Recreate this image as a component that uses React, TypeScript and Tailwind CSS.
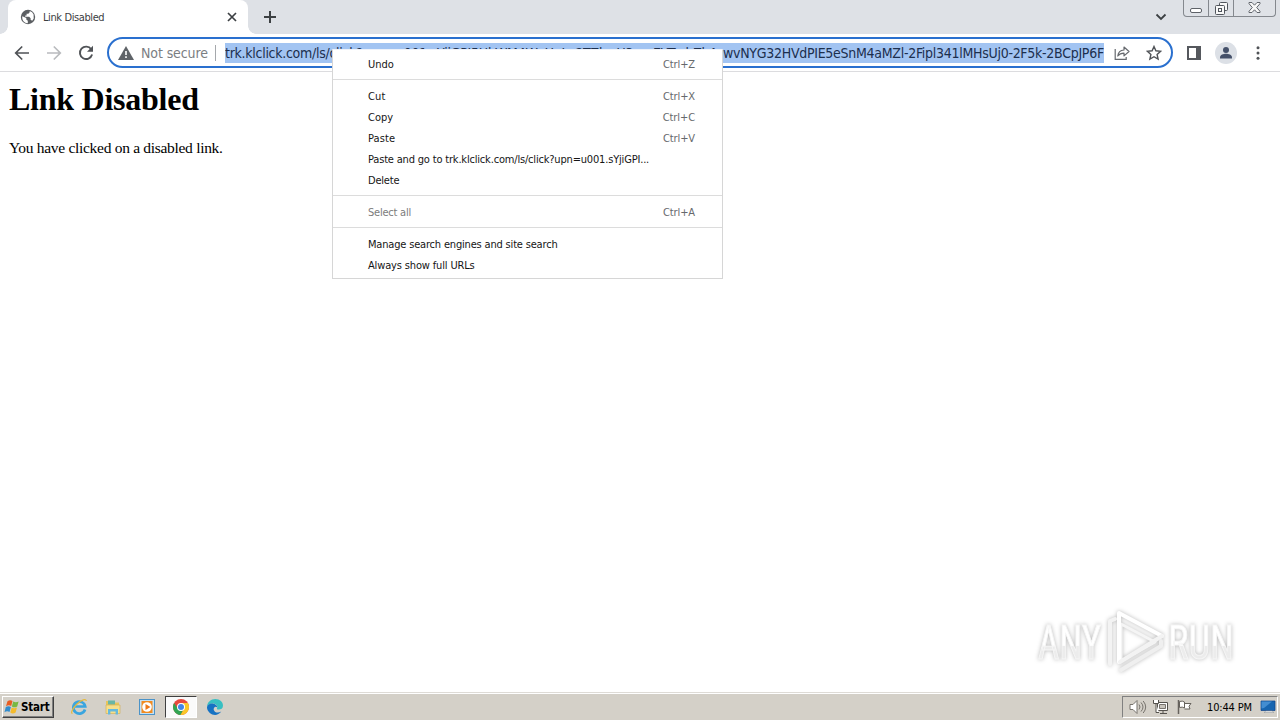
import type { ReactNode } from "react";

const UI_FONT = "font-['DejaVu_Sans_Condensed','DejaVu_Sans',sans-serif] [font-stretch:condensed] whitespace-nowrap";

interface MenuItem {
  label: string;
  shortcut?: string;
  disabled?: boolean;
  tracking?: string;
}

const menuGroups: MenuItem[][] = [
  [{ label: "Undo", shortcut: "Ctrl+Z" }],
  [
    { label: "Cut", shortcut: "Ctrl+X", tracking: "tracking-[0.1px]" },
    { label: "Copy", shortcut: "Ctrl+C" },
    { label: "Paste", shortcut: "Ctrl+V", tracking: "tracking-[0.1px]" },
    { label: "Paste and go to trk.klclick.com/ls/click?upn=u001.sYjiGPI...", tracking: "tracking-[-0.18px]" },
    { label: "Delete", tracking: "tracking-[-0.2px]" },
  ],
  [{ label: "Select all", shortcut: "Ctrl+A", disabled: true, tracking: "tracking-[-0.23px]" }],
  [
    { label: "Manage search engines and site search", tracking: "tracking-[-0.18px]" },
    { label: "Always show full URLs", tracking: "tracking-[-0.15px]" },
  ],
];

function GlobeIcon() {
  return (
    <svg viewBox="0 0 16 16" className="size-4 shrink-0" aria-hidden="true">
      <circle cx="8" cy="8" r="7.2" fill="#5b5e62" />
      <path d="M2.3 7.2 6.3 9v1.6l1.5 1.2v2.4C4.4 14.2 1.7 11.2 2.3 7.2Z" fill="#fff" />
      <path d="M9.7 2.1v1.2L8.3 4.7H6.6v1.8H5.2v1.3h4l1.4 1.4v1.6l1.6 1 1.5-2.3-.1-4.1-1.5-2.1Z" fill="#fff" />
    </svg>
  );
}

function TabStrip() {
  return (
    <div className="flex h-[34px] bg-[#dee1e6]">
      <div className="relative ml-2 flex h-full w-60 items-center rounded-t-lg bg-white pl-3 pr-[11px]">
        <span className="absolute -left-2 bottom-0 size-2 bg-[radial-gradient(circle_at_0_0,transparent_7.5px,white_8px)]" />
        <span className="absolute -right-2 bottom-0 size-2 bg-[radial-gradient(circle_at_100%_0,transparent_7.5px,white_8px)]" />
        <GlobeIcon />
        <span className="ml-[7px] pt-0.5 text-[11px] leading-4 tracking-[-0.4px] text-[#3c4043]">Link Disabled</span>
        <svg viewBox="0 0 10 10" className="ml-auto size-[10px]" stroke="#3c4043" strokeWidth="1.7" aria-hidden="true">
          <path d="m1 1 8 8M9 1 1 9" />
        </svg>
      </div>
      <svg viewBox="0 0 12 12" className="ml-4 mt-[11px] size-3" stroke="#3c4043" strokeWidth="2" aria-hidden="true">
        <path d="M6 0v12M0 6h12" />
      </svg>
      <svg viewBox="0 0 12 8" className="ml-auto mr-4 mt-[13px] h-2 w-3" fill="none" stroke="#3c4043" strokeWidth="1.8" aria-hidden="true">
        <path d="m1.5 1.5 4.5 4.5 4.5-4.5" />
      </svg>
      <WindowButtons />
    </div>
  );
}

function WindowButtons() {
  return (
    <div className="mr-1 flex h-[17px] w-[93px] rounded-b-[4px] border border-t-0 border-[#84888e] bg-[#dfe2e7]">
      <div className="flex w-[25px] justify-center border-r border-[#84888e]">
        <span className="mt-2 h-[5px] w-3 rounded-[2px] border border-[#5e6268] bg-white" />
      </div>
      <div className="flex w-[25px] justify-center border-r border-[#84888e]">
        <svg viewBox="0 0 13 13" className="mt-[2px] size-[13px]" fill="#f8f8f8" stroke="#50555c" aria-hidden="true">
          <rect x="4.5" y=".5" width="8" height="8" rx="1" />
          <rect x=".5" y="3.5" width="9" height="9" rx="1" />
          <rect x="3.5" y="6.5" width="3" height="3" />
        </svg>
      </div>
      <div className="flex flex-1 justify-center">
        <svg viewBox="0 0 13 11" className="mt-[2px] h-[11px] w-[13px]" fill="#f8f8f8" stroke="#62666d" aria-hidden="true">
          <path d="M1 .5h3l2.5 2.7L9 .5h3v1.2L8.7 5.5 12 9.3v1.2H9L6.5 7.8 4 10.5H1V9.3l3.3-3.8L1 1.7Z" />
        </svg>
      </div>
    </div>
  );
}

function Toolbar() {
  return (
    <div className="flex h-[38px] items-center border-b border-[#dcdcdf] bg-white pl-[14px]">
      <svg viewBox="0 0 16 16" className="size-4" fill="none" stroke="#505357" strokeWidth="1.7" aria-hidden="true">
        <path d="M15 8H2M8.2 1.5 1.7 8l6.5 6.5" />
      </svg>
      <svg viewBox="0 0 16 16" className="ml-4 size-4" fill="none" stroke="#b9bbbe" strokeWidth="1.7" aria-hidden="true">
        <path d="M1 8h13M7.8 1.5 14.3 8l-6.5 6.5" />
      </svg>
      <svg viewBox="0 0 16 16" className="ml-4 size-4" aria-hidden="true">
        <path d="M13.2 4.2A6.2 6.2 0 1 0 14.1 9.5" fill="none" stroke="#505357" strokeWidth="1.9" />
        <path d="M15 .8v6H9Z" fill="#505357" />
      </svg>

      <div className="ml-[13px] flex h-[31px] w-[1066px] shrink-0 items-center rounded-full border-2 border-[#2a70cf] bg-white pl-[9px]">
        <svg viewBox="0 0 16 14" className="h-[14px] w-4 shrink-0" aria-hidden="true">
          <path d="M8 0 16 14H0Z" fill="#5f6368" />
          <path d="M7.2 5h1.6v4H7.2Zm0 5.3h1.6v1.6H7.2Z" fill="#fff" />
        </svg>
        <span className="ml-[7px] w-[67px] shrink-0 text-sm tracking-[-0.1px] text-[#7b7e82]">Not secure</span>
        <span className="ml-[7px] h-4 w-px shrink-0 bg-[#a5a8ac]" />
        <div className="ml-[9px] flex h-5 w-[879px] shrink-0 items-center overflow-hidden bg-[#a2c4f2] text-sm tracking-[-0.28px] text-[#1c2f4e]">
          <span className="w-[498px] shrink-0">
            trk.klclick.com/ls/click?upn=u001.sYjiGPI5HkWM4WvUuLe2TZhwU3muEYTrvhZk4
          </span>
          <span className="shrink-0">wvNYG32HVdPIE5eSnM4aMZl-2Fipl341lMHsUj0-2F5k-2BCpJP6F</span>
        </div>
        <svg viewBox="0 0 16 16" className="ml-[10px] size-4 shrink-0" fill="none" stroke="#66696e" strokeWidth="1.2" aria-hidden="true">
          <path d="M1.2 4v10.4h11V12" />
          <path d="M3.8 11C4.2 7.2 6.5 5.2 10 5V2l5 4.5-5 4.4V8.2C7.2 8.2 5.3 9 3.8 11Z" strokeLinejoin="round" />
        </svg>
        <svg viewBox="0 0 16 16" className="ml-4 size-4 shrink-0" fill="none" stroke="#505357" strokeWidth="1.4" aria-hidden="true">
          <path d="m8 1.5 1.9 4.3 4.7.5-3.5 3.1 1 4.7L8 11.7l-4.1 2.4 1-4.7-3.5-3.1 4.7-.5Z" />
        </svg>
      </div>

      <svg viewBox="0 0 14 14" className="ml-[14px] size-[14px]" aria-hidden="true">
        <path d="M1 1h12v12H1Z" fill="none" stroke="#55585d" strokeWidth="2" />
        <path d="M9 1h4v12H9Z" fill="#55585d" />
      </svg>
      <svg viewBox="0 0 22 22" className="ml-[14px] size-[22px]" aria-hidden="true">
        <circle cx="11" cy="11" r="11" fill="#dce0e6" />
        <circle cx="11" cy="8" r="3" fill="#45516a" />
        <path d="M5 16.5v-1.2c0-2.4 3.5-3.5 6-3.5s6 1.1 6 3.5v1.2Z" fill="#45516a" />
      </svg>
      <svg viewBox="0 0 4 16" className="ml-[19px] h-4 w-1" fill="#505357" aria-hidden="true">
        <circle cx="2" cy="2.8" r="1.5" />
        <circle cx="2" cy="8" r="1.5" />
        <circle cx="2" cy="13.2" r="1.5" />
      </svg>
    </div>
  );
}

function ContextMenu() {
  return (
    <div className={`absolute left-[332px] top-[49px] w-[391px] border border-[#d6d6d6] border-t-[#eef2fa] bg-white py-[3px] text-[11px] leading-[23px] ${UI_FONT}`}>
      {menuGroups.map((group, i) => (
        <div key={i} className={i > 0 ? "mt-[5px] border-t border-[#dcdcdc] pt-[5px]" : ""}>
          {group.map((item) => (
            <div
              key={item.label}
              className={`flex h-[21px] justify-between pl-[35px] pr-[27px] ${item.disabled ? "text-[#7c7c7c]" : "text-[#151515]"}`}
            >
              <span className={item.tracking}>{item.label}</span>
              {item.shortcut && <span className="tracking-[-0.1px] text-[#66696c]">{item.shortcut}</span>}
            </div>
          ))}
        </div>
      ))}
    </div>
  );
}

function Watermark() {
  return (
    <svg
      viewBox="0 0 200 64"
      className="absolute bottom-[48px] right-[45px] h-16 w-[200px] overflow-visible font-['Roboto',sans-serif] drop-shadow-[0_0_2px_rgba(0,0,0,0.28)]"
      aria-hidden="true"
    >
      <defs>
        <linearGradient id="fade" x1="0" y1="0" x2="0" y2="1">
          <stop offset="0.55" stopColor="#fff" />
          <stop offset="0.57" stopColor="#ececec" />
        </linearGradient>
      </defs>
      <text x="3" y="51" fontSize="49" textLength="63" lengthAdjust="spacingAndGlyphs" fill="url(#fade)" stroke="#f6f6f6">ANY</text>
      <text x="133" y="51" fontSize="49" textLength="66" lengthAdjust="spacingAndGlyphs" fill="url(#fade)" stroke="#f6f6f6">RUN</text>
      <g fill="none" strokeLinejoin="round" strokeLinecap="round">
        <path d="M75 56V13l5-2" stroke="#f3f3f3" strokeWidth="4" />
        <path d="M86 62 126 38v-5" stroke="#efefef" strokeWidth="4" />
        <path d="M86 18v32M86 16l34 18-34 19" stroke="#f5f5f5" strokeWidth="3" />
        <path d="M84 54V5l43 23" stroke="#fff" strokeWidth="4" />
        <path d="M127 28 85 54" stroke="#f3f3f3" strokeWidth="4" />
      </g>
    </svg>
  );
}

function TaskIcon({ children, active }: { children: ReactNode; active?: boolean }) {
  return (
    <div
      className={`flex h-[22px] w-8 items-center justify-center ${active ? "border border-b-white border-l-[#404040] border-r-white border-t-[#404040] bg-[#fafafa]" : ""}`}
    >
      <svg viewBox="0 0 18 18" className="size-[18px]" aria-hidden="true">
        {children}
      </svg>
    </div>
  );
}

function Taskbar() {
  return (
    <div className="flex h-7 items-center border-t border-[#dedbd6] bg-[#d4d0c8] px-[2px] shadow-[inset_0_1px_0_#fff]">
      <div className="mt-px flex h-[22px] w-[52px] items-center border border-b-[#404040] border-l-white border-r-[#404040] border-t-white pl-px shadow-[inset_-1px_-1px_0_#808080]">
        <svg viewBox="0 0 17 16" className="h-4 w-[17px] shrink-0" aria-hidden="true">
          <path d="M3.5 2.2C5.4.8 7 .9 8.5 2L7.2 7.1C5.7 6 4 6 2 7.2Z" fill="#e85d22" />
          <path d="M9.2 2.4c1.7 1.1 3.5 1.1 5.4 0l-1.4 5.1c-1.9 1.2-3.7 1.1-5.3 0Z" fill="#78b843" />
          <path d="M1.8 8.1c1.8-1.1 3.5-1.2 5.1 0l-1.4 5c-1.5-1-3.2-1-5 .1Z" fill="#318ccd" />
          <path d="M7.7 8.5c1.7 1.1 3.4 1.1 5.3 0l-1.4 5c-1.9 1.2-3.7 1.2-5.3 0Z" fill="#f4bb2d" />
        </svg>
        <span className="text-[11.5px] font-bold leading-4 tracking-[-0.2px]">Start</span>
      </div>

      <div className="ml-[9px] mt-px flex gap-[2px]">
        <TaskIcon>
          <path d="M15 11.5A6 6 0 1 1 15.2 8.5H5" fill="none" stroke="#3aa5df" strokeWidth="2.7" />
          <path d="M2.5 15.5c-2 0-.5-4.5 4-9 5-5 9.7-6.2 9.8-3.4" fill="none" stroke="#e5b93c" strokeWidth="1.2" />
        </TaskIcon>
        <TaskIcon>
          <path d="M2 3h5l1 1.5h7V14H2Z" fill="#e8c55b" />
          <path d="M4 2.5h7v4H4Z" fill="#69b6a5" />
          <path d="M2 7h14v8.5H2Z" fill="#f6df8a" stroke="#d2ad51" strokeWidth=".6" />
          <path d="M4 16.5V11h10v5.5h-2.4v-3H6.4v3Z" fill="#65b9dd" />
        </TaskIcon>
        <TaskIcon>
          <rect x="1.5" y="1.5" width="15" height="15" fill="#c6e1f3" stroke="#4b93c8" />
          <rect x="3.5" y="3" width="11" height="12" fill="#f18b20" />
          <circle cx="9" cy="9" r="4.8" fill="#fff" />
          <path d="m7.5 6 5 3-5 3Z" fill="#ee7817" />
        </TaskIcon>
        <TaskIcon active>
          <circle cx="9" cy="9" r="8" fill="#e8493d" />
          <path d="M2.1 5A8 8 0 0 0 8.5 17L11.8 11H6Z" fill="#31a553" />
          <path d="M8.5 17A8 8 0 0 0 15.9 5H9l3.2 5.5Z" fill="#fac728" />
          <circle cx="9" cy="9" r="4" fill="#fff" />
          <circle cx="9" cy="9" r="3" fill="#4285e8" />
        </TaskIcon>
        <TaskIcon>
          <path d="M1 9C1 4 5 1 9.3 1 14 1 17 4.2 17 7.5c0 3-2 4-4.3 4-2 0-2-.8-1.5-1.8C12 7.5 9 5 6 5.5 3 5.7 1.4 7.2 1 9Z" fill="#38bfc2" />
          <path d="M1 9c.5-2.3 3-3.8 5.6-3.5 2.8.3 4.7 2.1 4.7 3.9-2-1.6-4.1.2-3.5 2.6.7 2.6 4.3 3.4 7.5 1.6C12 18.1 6.8 17.6 3.8 15 1.8 13.2.9 11.1 1 9Z" fill="#1672c3" />
        </TaskIcon>
      </div>

      <div className="ml-auto mt-px flex h-[22px] w-[156px] items-center border border-b-white border-l-[#808080] border-r-white border-t-[#808080] pl-[6px]">
        <svg viewBox="0 0 18 16" className="h-4 w-[18px] shrink-0" fill="none" stroke="#77736d" aria-hidden="true">
          <path d="M1 5.5h3l4-4v13l-4-4H1Z" fill="#fff" />
          <path d="M10 5.5q2 2.5 0 5M12 3.5q4 4.5 0 9M14.2 2q5 6 0 12" />
        </svg>
        <svg viewBox="0 0 17 16" className="ml-[5px] h-4 w-[17px] shrink-0" fill="#fff" stroke="#55524d" aria-hidden="true">
          <path d="M5.5 3.5h10v8h-10ZM8 14.5h7M11 11.5v3" />
          <path d="M7.5 5.5h6v4h-6Z" fill="#c8c4bc" stroke="#77736d" />
          <path d="M1.5 1v3.5h5V1M4 4.5v9h3" />
        </svg>
        <svg viewBox="0 0 17 16" className="ml-[7px] h-4 w-[17px] shrink-0" fill="#fff" stroke="#66625d" aria-hidden="true">
          <path d="M2.5 1v14" strokeWidth="1.5" />
          <path d="M3.5 2.5q3-1 5 .5v6q-2-1.5-5-.5ZM8.5 4.5h6.5l-2 2.7 1 2.8H8.5" />
        </svg>
        <span className="ml-[14px] w-[45px] shrink-0 pt-0.5 text-[11px] leading-4 tracking-[-0.15px]">10:44 PM</span>
        <svg viewBox="0 0 16 16" className="ml-[8px] h-4 w-4 shrink-0" aria-hidden="true">
          <path d="M1 2h14v9.5H1Z" fill="#1765b0" stroke="#0d428a" strokeWidth=".7" />
          <path d="M1.5 2.5H12L4 9l-2.5.5Z" fill="#438dd1" />
          <path d="M4 13.5 6 12h6l2 1.5Z" fill="#f1f1f1" stroke="#8b9197" strokeWidth=".5" />
        </svg>
      </div>
    </div>
  );
}

export default function App() {
  return (
    <div className={`relative flex h-[720px] w-[1280px] flex-col overflow-hidden bg-white ${UI_FONT}`}>
      <TabStrip />
      <Toolbar />
      <main className="flex-1 pl-[9px] pt-[9px] font-['Liberation_Serif',serif] text-black">
        <h1 className="text-[32px] font-bold leading-[37px] tracking-[-0.25px]">Link Disabled</h1>
        <p className="mt-[21px] text-[15.5px] leading-[18px] tracking-[-0.3px]">You have clicked on a disabled link.</p>
      </main>
      <Taskbar />
      <ContextMenu />
      <Watermark />
    </div>
  );
}
